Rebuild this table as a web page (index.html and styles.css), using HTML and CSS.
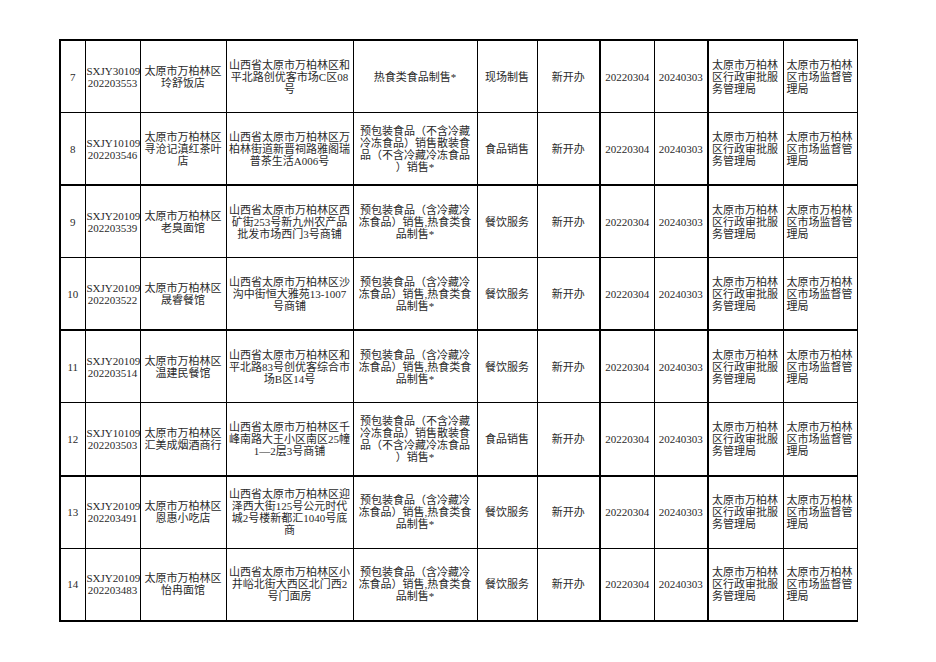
FILE: index.html
```html
<!DOCTYPE html>
<html lang="zh">
<head>
<meta charset="utf-8">
<title>许可公示</title>
<link rel="stylesheet" href="styles.css">
</head>
<body>
<table class="sheet">
<colgroup>
<col class="c1"><col class="c2"><col class="c3"><col class="c4"><col class="c5"><col class="c6"><col class="c7"><col class="c8"><col class="c9"><col class="c10"><col class="c11">
</colgroup>
<tbody>
<tr class="thick-top">
<td>7</td><td>SXJY30109<br>202203553</td><td>太原市万柏林区<br>玲舒饭店</td><td>山西省太原市万柏林区和<br>平北路创优客市场C区08<br>号</td><td>热食类食品制售*</td><td>现场制售</td><td>新开办</td><td class="tl">20220304</td><td>20240303</td><td class="tl left">太原市万柏林<br>区行政审批服<br>务管理局</td><td class="left">太原市万柏林<br>区市场监督管<br>理局</td>
</tr>
<tr>
<td>8</td><td>SXJY10109<br>202203546</td><td>太原市万柏林区<br>寻沧记滇红茶叶<br>店</td><td>山西省太原市万柏林区万<br>柏林街道新晋祠路雅阁瑞<br>普茶生活A006号</td><td>预包装食品（不含冷藏<br>冷冻食品）销售散装食<br>品（不含冷藏冷冻食品<br>）销售*</td><td>食品销售</td><td>新开办</td><td class="tl">20220304</td><td>20240303</td><td class="tl left">太原市万柏林<br>区行政审批服<br>务管理局</td><td class="left">太原市万柏林<br>区市场监督管<br>理局</td>
</tr>
<tr class="thick-top">
<td>9</td><td>SXJY20109<br>202203539</td><td>太原市万柏林区<br>老臭面馆</td><td>山西省太原市万柏林区西<br>矿街253号新九州农产品<br>批发市场西门3号商铺</td><td>预包装食品（含冷藏冷<br>冻食品）销售,热食类食<br>品制售*</td><td>餐饮服务</td><td>新开办</td><td class="tl">20220304</td><td>20240303</td><td class="tl left">太原市万柏林<br>区行政审批服<br>务管理局</td><td class="left">太原市万柏林<br>区市场监督管<br>理局</td>
</tr>
<tr>
<td>10</td><td>SXJY20109<br>202203522</td><td>太原市万柏林区<br>晟睿餐馆</td><td>山西省太原市万柏林区沙<br>沟中街恒大雅苑13-1007<br>号商铺</td><td>预包装食品（含冷藏冷<br>冻食品）销售,热食类食<br>品制售*</td><td>餐饮服务</td><td>新开办</td><td class="tl">20220304</td><td>20240303</td><td class="tl left">太原市万柏林<br>区行政审批服<br>务管理局</td><td class="left">太原市万柏林<br>区市场监督管<br>理局</td>
</tr>
<tr class="thick-top">
<td>11</td><td>SXJY20109<br>202203514</td><td>太原市万柏林区<br>温建民餐馆</td><td>山西省太原市万柏林区和<br>平北路83号创优客综合市<br>场B区14号</td><td>预包装食品（含冷藏冷<br>冻食品）销售,热食类食<br>品制售*</td><td>餐饮服务</td><td>新开办</td><td class="tl">20220304</td><td>20240303</td><td class="tl left">太原市万柏林<br>区行政审批服<br>务管理局</td><td class="left">太原市万柏林<br>区市场监督管<br>理局</td>
</tr>
<tr>
<td>12</td><td>SXJY10109<br>202203503</td><td>太原市万柏林区<br>汇美成烟酒商行</td><td>山西省太原市万柏林区千<br>峰南路大王小区南区25幢<br>1—2层3号商铺</td><td>预包装食品（不含冷藏<br>冷冻食品）销售散装食<br>品（不含冷藏冷冻食品<br>）销售*</td><td>食品销售</td><td>新开办</td><td class="tl">20220304</td><td>20240303</td><td class="tl left">太原市万柏林<br>区行政审批服<br>务管理局</td><td class="left">太原市万柏林<br>区市场监督管<br>理局</td>
</tr>
<tr class="thick-top">
<td>13</td><td>SXJY20109<br>202203491</td><td>太原市万柏林区<br>恩惠小吃店</td><td>山西省太原市万柏林区迎<br>泽西大街125号公元时代<br>城2号楼新都汇1040号底<br>商</td><td>预包装食品（含冷藏冷<br>冻食品）销售,热食类食<br>品制售*</td><td>餐饮服务</td><td>新开办</td><td class="tl">20220304</td><td>20240303</td><td class="tl left">太原市万柏林<br>区行政审批服<br>务管理局</td><td class="left">太原市万柏林<br>区市场监督管<br>理局</td>
</tr>
<tr class="last">
<td>14</td><td>SXJY20109<br>202203483</td><td>太原市万柏林区<br>怡冉面馆</td><td>山西省太原市万柏林区小<br>井峪北街大西区北门西2<br>号门面房</td><td>预包装食品（含冷藏冷<br>冻食品）销售,热食类食<br>品制售*</td><td>餐饮服务</td><td>新开办</td><td class="tl">20220304</td><td>20240303</td><td class="tl left">太原市万柏林<br>区行政审批服<br>务管理局</td><td class="left">太原市万柏林<br>区市场监督管<br>理局</td>
</tr>
</tbody>
</table>
</body>
</html>
```
FILE: styles.css
```css
html, body {
  margin: 0;
  padding: 0;
  background: #ffffff;
}

body {
  padding: 39px 0 0 59px;
}

.sheet {
  border-collapse: collapse;
  table-layout: fixed;
  width: 797px;
  font-family: "Liberation Serif", "Noto Sans CJK SC", serif;
  font-size: 11px;
  font-weight: 400;
  line-height: 12px;
  color: #2a2a2a;
}

.c1 { width: 25px; }
.c2 { width: 55px; }
.c3 { width: 86px; }
.c4 { width: 127px; }
.c5 { width: 124px; }
.c6 { width: 60px; }
.c7 { width: 63px; }
.c8 { width: 54px; }
.c9 { width: 54px; }
.c10 { width: 75px; }
.c11 { width: 74px; }

.sheet tr {
  height: 72.6px;
}

.sheet td {
  border: 1px solid #000;
  padding: 0 1px;
  text-align: center;
  vertical-align: middle;
  white-space: nowrap;
  overflow: hidden;
}

.sheet td:first-child {
  border-left: 2px solid #000;
}

.sheet td.tl {
  border-left: 2px solid #000;
}

.sheet td.left {
  text-align: left;
  padding-left: 3px;
}

.sheet tr.thick-top td {
  border-top: 2px solid #000;
}

.sheet tr.last td {
  border-bottom: 2px solid #000;
}
```
